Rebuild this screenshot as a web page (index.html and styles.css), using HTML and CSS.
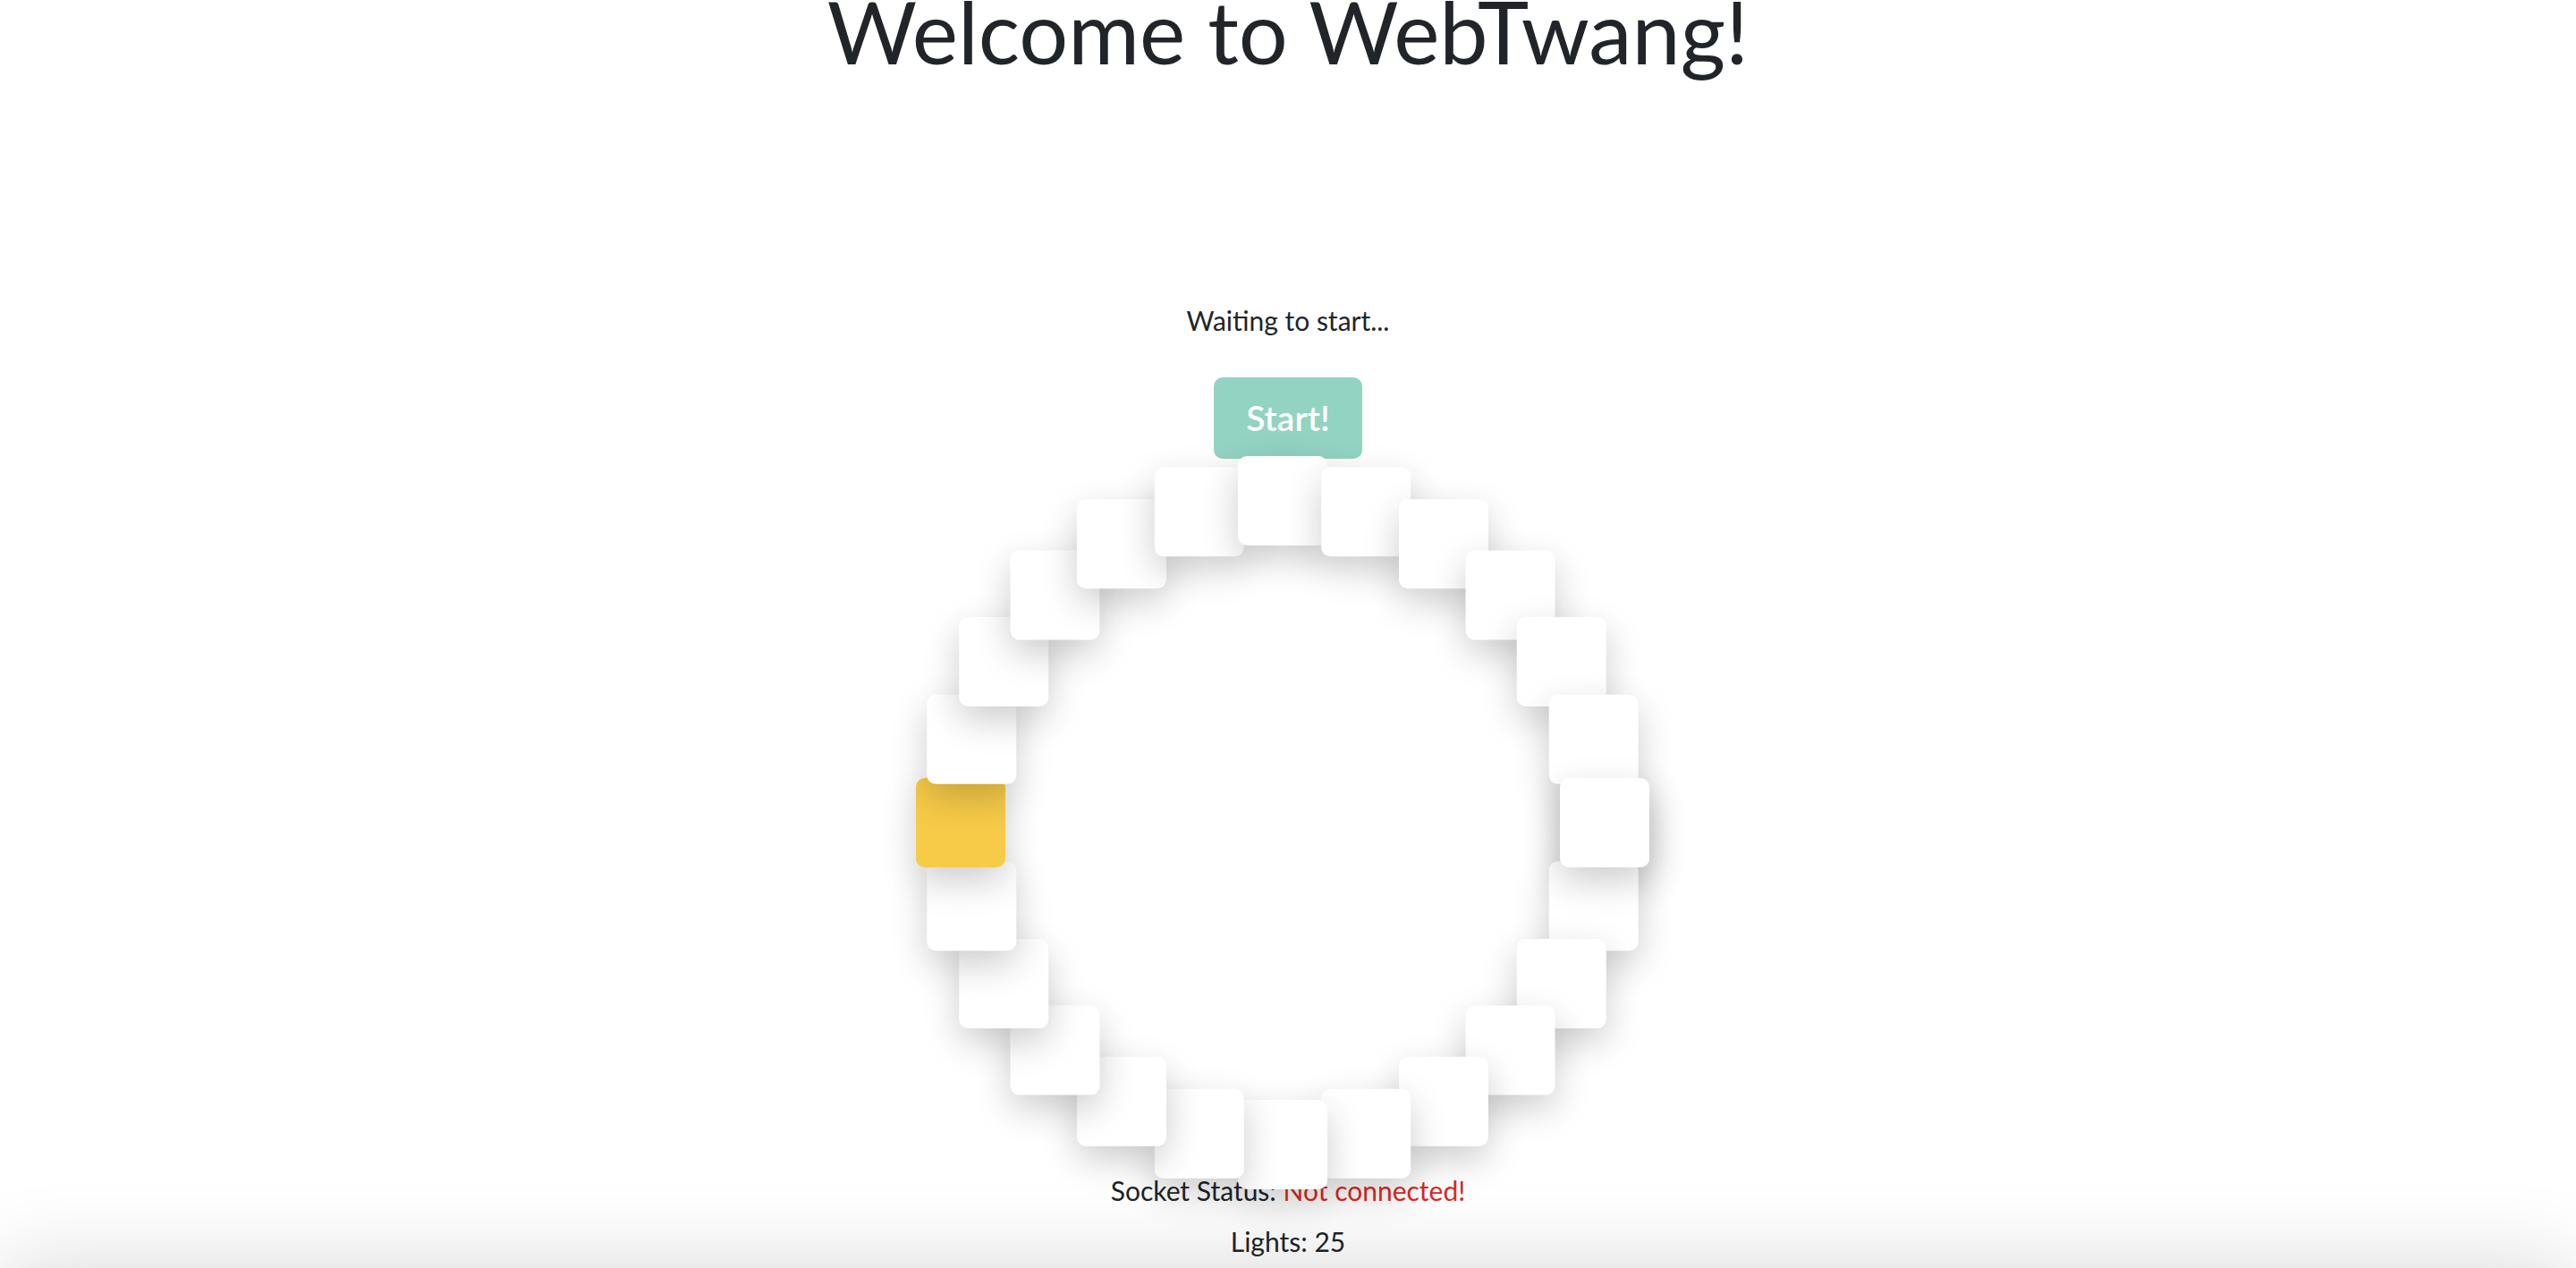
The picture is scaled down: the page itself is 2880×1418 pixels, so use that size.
FILE: index.html
```html
<!DOCTYPE html>
<html lang="en">
<head>
<meta charset="utf-8">
<title>WebTwang</title>
<link rel="stylesheet" href="styles.css">
</head>
<body>
<main class="page">
  <h1 class="title">Welcome to WebTwang!</h1>
  <p class="status">Waiting to start...</p>
  <button class="start" type="button">Start!</button>
  <div class="ring">
    <div class="light" style="--i:0"></div>
    <div class="light" style="--i:1"></div>
    <div class="light" style="--i:2"></div>
    <div class="light" style="--i:3"></div>
    <div class="light" style="--i:4"></div>
    <div class="light" style="--i:5"></div>
    <div class="light" style="--i:6"></div>
    <div class="light" style="--i:7"></div>
    <div class="light" style="--i:8"></div>
    <div class="light" style="--i:9"></div>
    <div class="light" style="--i:10"></div>
    <div class="light" style="--i:11"></div>
    <div class="light light-on" style="--i:12"></div>
    <div class="light" style="--i:13"></div>
    <div class="light" style="--i:14"></div>
    <div class="light" style="--i:15"></div>
    <div class="light" style="--i:16"></div>
    <div class="light" style="--i:17"></div>
    <div class="light" style="--i:18"></div>
    <div class="light" style="--i:19"></div>
    <div class="light" style="--i:20"></div>
    <div class="light" style="--i:21"></div>
    <div class="light" style="--i:22"></div>
    <div class="light" style="--i:23"></div>
    <div class="light" style="--i:24"></div>
  </div>
  <p class="socket">Socket Status: <span class="socket-bad">Not connected!</span></p>
  <p class="count">Lights: 25</p>
</main>
</body>
</html>
```

FILE: styles.css
```css
html, body {
  margin: 0;
  padding: 0;
  background: #ffffff;
}

body {
  font-family: "Lato", "Liberation Sans", sans-serif;
  color: #212529;
  font-size: 30px;
  line-height: 1.5;
  overflow: hidden;
  height: 100vh;
}

body::after {
  content: "";
  position: fixed;
  left: 0;
  right: 0;
  top: 100vh;
  height: 200px;
  box-shadow: 0 0 100px rgba(0, 0, 0, 0.16);
  background: #ffffff;
}

.page {
  display: flex;
  flex-direction: column;
  align-items: center;
  text-align: center;
}

.title {
  margin: -23px 0 0;
  font-size: 97px;
  font-weight: 400;
  line-height: 1.2;
}

.status {
  margin: 243px 0 0;
}

.start {
  margin-top: 41px;
  font-family: "Lato", "Liberation Sans", sans-serif;
  font-size: 39px;
  font-weight: 600;
  line-height: 41px;
  padding: 25px 36px;
  color: #ffffff;
  background: #93d3c1;
  border: 0;
  border-radius: 10px;
}

.ring {
  position: relative;
  width: 720px;
  height: 720px;
  margin-top: 47px;
}

.light {
  position: absolute;
  left: 304px;
  top: 310px;
  width: 100px;
  height: 100px;
  border-radius: 10px;
  background: #ffffff;
  box-shadow: 0 15px 40px rgba(0, 0, 0, 0.2);
  transform: rotate(calc(var(--i) * 15deg)) translateX(360px) rotate(calc(var(--i) * -15deg));
}

.light-on {
  background: #f7cb48;
}

.socket {
  margin: 29px 0 0;
}

.socket-bad {
  color: #e0281e;
}

.count {
  margin: 12px 0 0;
}
```
